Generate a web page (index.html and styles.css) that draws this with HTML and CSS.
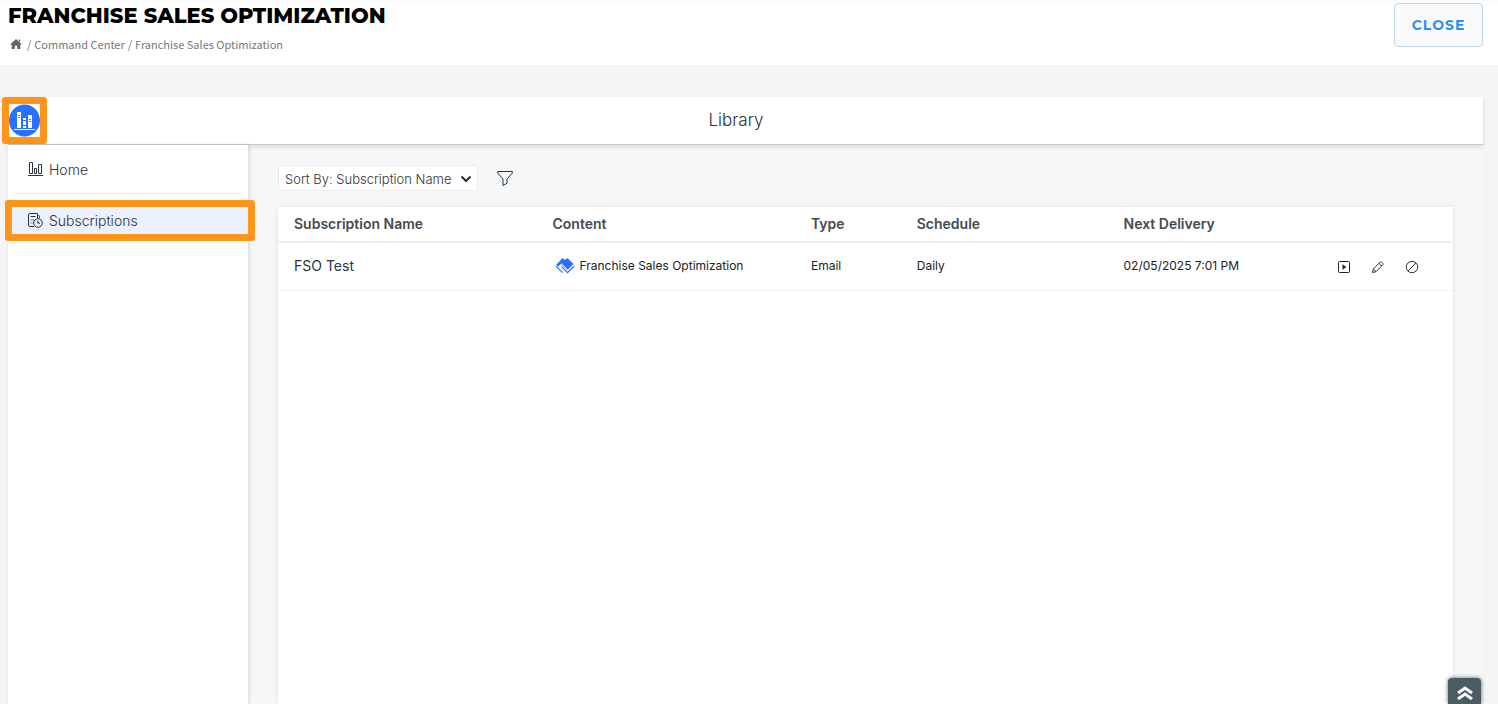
FILE: index.html
```html
<!DOCTYPE html>
<html lang="en">
<head>
    <meta charset="UTF-8">
    <meta name="viewport" content="width=device-width, initial-scale=1.0">
    <title>Franchise Sales Optimization</title>
    <link rel="stylesheet" href="styles.css">
</head>
<body>
<header class="page-header">
    <div>
        <h1>FRANCHISE SALES OPTIMIZATION</h1>
        <nav class="breadcrumb" aria-label="Breadcrumb">
            <a href="#" aria-label="Home">
                <svg width="12" height="10" viewBox="0 0 12 10"><path fill="#666" d="M6 0 12 5.4H10.3V10H7.2V6.8H4.8V10H1.7V5.4H0L6 0ZM8.6.6H10V3L8.6 1.8Z"/></svg>
            </a>
            <span>/</span>
            <a href="#">Command Center</a>
            <span>/</span>
            <a href="#">Franchise Sales Optimization</a>
        </nav>
    </div>
    <button class="close-btn" type="button">CLOSE</button>
</header>

<div class="app">
    <div class="app-bar">
        <button class="logo-btn highlight" type="button" aria-label="Library menu">
            <svg width="31" height="33" viewBox="0 0 31 33">
                <ellipse cx="15.5" cy="16.5" rx="15.5" ry="16" fill="#2970ff"/>
                <path fill="#fff" d="M8 8h4v16H8zM14 14h3v10h-3zM19 11h4v13h-4zM5 25h21v1H5z"/>
                <path fill="#2970ff" d="M9 11h2v1H9zM9 13h2v1H9zM14 16h3v1h-3zM14 21h3v1h-3zM20 15h2v1h-2zM20 17h2v1h-2z"/>
            </svg>
        </button>
        <h2>Library</h2>
    </div>

    <div class="app-body">
        <nav class="sidebar">
            <a class="side-link" href="#">
                <svg width="15" height="15" viewBox="0 0 15 15" fill="none" stroke="#2b3240"><path d="M1.5.5h3v11h-3zM6.500 6.500h2v5h-2zM10.500 2.500h3v9h-3zM0 13.500h15"/></svg>
                Home
            </a>
            <hr>
            <a class="side-link active highlight" href="#">
                <svg width="15" height="15" viewBox="0 0 15 15" fill="none" stroke="#2b3240">
                    <path d="M6 13.5H2A1.5 1.5 0 0 1 .5 12V2A1.5 1.5 0 0 1 2 .5h7.5V5M9.500 2.500h1a1 1 0 0 1 1 1V5M2.500 3.500h5M2.500 7h1M4.500 7h1.500M2.500 10h1M4.500 10h.5"/>
                    <circle cx="10" cy="10" r="4.300"/>
                    <path d="M9.800 7.500v2.700h2.200"/>
                </svg>
                Subscriptions
            </a>
        </nav>

        <main class="content">
            <div class="toolbar">
                <div class="sort">
                    <select aria-label="Sort subscriptions">
                        <option>Sort By: Subscription Name</option>
                        <option>Sort By: Next Delivery</option>
                    </select>
                    <svg width="12" height="8" viewBox="0 0 12 8" fill="none" stroke="#222b38" stroke-width="2"><path d="M1.500 1.500 6 6l4.500-4.500"/></svg>
                </div>
                <button class="icon-btn" type="button" aria-label="Filter">
                    <svg width="16" height="16" viewBox="0 0 16 16" fill="none" stroke="#2b3240" stroke-linejoin="round"><path d="M.7 1.500h14.600v1.600L10 9v4.300L6 15.500V9L.7 3.100z"/></svg>
                </button>
            </div>

            <div class="table-card">
                <table>
                    <colgroup>
                        <col class="col-name">
                        <col class="col-content">
                        <col class="col-type">
                        <col class="col-schedule">
                        <col>
                        <col class="col-actions">
                    </colgroup>
                    <thead>
                    <tr>
                        <th>Subscription Name</th>
                        <th>Content</th>
                        <th>Type</th>
                        <th>Schedule</th>
                        <th>Next Delivery</th>
                        <th></th>
                    </tr>
                    </thead>
                    <tbody>
                    <tr>
                        <td class="name">FSO Test</td>
                        <td>
                            <div class="content-cell">
                                <svg width="20" height="16" viewBox="0 0 20 16">
                                    <path fill="#2970ff" d="M3.500 4.500 7 .5h1.500L10 2 11.500.5H13L18.500 6l-6.300 6.200-5.700-5.700L3.500 9 1 6.800z"/>
                                    <path fill="none" stroke="#fff" d="m1.500 7.500 6.300 6.200M3.500 8.500l3-2.500 6.500 6.300"/>
                                    <path fill="none" stroke="#2970ff" stroke-width="1.200" d="m1 8.200 6.500 6.500M6.500 8.500l6 6.200L19.200 8"/>
                                </svg>
                                <span>Franchise Sales Optimization</span>
                            </div>
                        </td>
                        <td>Email</td>
                        <td>Daily</td>
                        <td>02/05/2025 7:01 PM</td>
                        <td class="actions-cell">
                            <div class="actions">
                                <button class="icon-btn" type="button" aria-label="Run now">
                                    <svg width="14" height="14" viewBox="0 0 14 14"><rect x="1.500" y="1.500" width="11" height="11" rx="1" fill="none" stroke="#222"/><path fill="#222" d="M5.500 4.300 9.300 7 5.500 9.700z"/></svg>
                                </button>
                                <button class="icon-btn" type="button" aria-label="Edit">
                                    <svg width="14" height="14" viewBox="0 0 14 14" fill="none" stroke="#333" stroke-linejoin="round"><path d="m1.500 12.500.8-3.500 7-7c.8-.8 3.500 1.700 2.700 2.700l-7 7zM8 3.300 10.700 6M2.300 9 5 11.700"/></svg>
                                </button>
                                <button class="icon-btn" type="button" aria-label="Disable">
                                    <svg width="14" height="14" viewBox="0 0 14 14" fill="none" stroke="#333"><circle cx="7" cy="7" r="5.700"/><path d="m3 11 8-8"/></svg>
                                </button>
                            </div>
                        </td>
                    </tr>
                    </tbody>
                </table>
            </div>
        </main>
    </div>
</div>

<button class="to-top" type="button" aria-label="Back to top">
    <svg width="16" height="14" viewBox="0 0 16 14" fill="none" stroke="#fff" stroke-width="3"><path d="m1 7 7-5 7 5M1 13l7-5 7 5"/></svg>
</button>
</body>
</html>
```
FILE: styles.css
```css
:root {
    --page-bg: #f5f5f5;
    --content-bg: #f6f7f9;
    --line: #f0f0f0;
    --text: #2b3240;
    --blue: #2b90f0;
    --orange: #ff951a;
}

* {
    margin: 0;
    padding: 0;
    box-sizing: border-box;
}

body {
    display: flex;
    flex-direction: column;
    min-height: 100vh;
    background-color: var(--page-bg);
    color: var(--text);
    font-family: Inter, "Liberation Sans", sans-serif;
    font-size: 14px;
}

a {
    color: inherit;
    text-decoration: none;
}

button {
    font-family: inherit;
    cursor: pointer;
}

svg {
    display: block;
}

/* Header */
.page-header {
    display: flex;
    justify-content: space-between;
    align-items: flex-start;
    height: 65px;
    padding: 3px 15px 0 8px;
    background: linear-gradient(#f9f9f9, #fff 3px);
}

.page-header h1 {
    color: #000;
    font-family: Montserrat, Inter, sans-serif;
    font-size: 21px;
    font-weight: 800;
    line-height: 26px;
}

.breadcrumb {
    display: flex;
    align-items: center;
    gap: 3px;
    margin-top: 5px;
    padding-left: 2px;
    color: #777;
    font-family: "Source Sans Pro", "Noto Sans CJK SC", sans-serif;
    font-size: 11px;
    line-height: 20px;
}

.breadcrumb a:first-child {
    margin-right: 2px;
}

.close-btn {
    width: 89px;
    height: 44px;
    padding-bottom: 1px;
    background-color: #fafafa;
    border: 1px solid #bdd7ee;
    border-radius: 4px;
    color: var(--blue);
    font-family: Montserrat, Inter, sans-serif;
    font-size: 14px;
    font-weight: 700;
    letter-spacing: 1px;
}

/* Orange frame drawn around the items being pointed out */
.highlight {
    position: relative;
}

.highlight::after {
    content: "";
    position: absolute;
    z-index: 3;
    inset: -7px;
    border: 7px solid var(--orange);
    border-radius: 3px;
    pointer-events: none;
}

/* App */
.app {
    display: flex;
    flex: 1;
    flex-direction: column;
    margin: 32px 15px 0 8px;
}

.app-bar {
    position: relative;
    z-index: 2;
    display: grid;
    grid-template-columns: 1fr auto 1fr;
    align-items: center;
    height: 48px;
    padding: 0 20px 0 1px;
    background-color: #fff;
    border-bottom: 1px solid #c8c9cc;
    box-shadow: 0 2px 5px rgba(0, 0, 0, 0.12);
}

.app-bar h2 {
    padding-bottom: 2px;
    font-size: 17px;
    font-weight: 300;
    line-height: 24px;
}

.logo-btn {
    width: 31px;
    height: 33px;
    background: #fff;
    border: none;
}

.app-body {
    display: flex;
    flex: 1;
}

.sidebar {
    position: relative;
    z-index: 2;
    width: 240px;
    background-color: #fff;
    box-shadow: 1px 0 4px rgba(0, 0, 0, 0.14);
}

.side-link {
    display: flex;
    align-items: center;
    gap: 6px;
    height: 27px;
    padding-left: 20px;
    font-weight: 300;
}

.side-link:first-child {
    height: 48px;
}

.side-link.active {
    background-color: #ebf1ff;
}

.side-link.highlight::after {
    inset: -7px -7px -7px -3px;
}

.sidebar hr {
    margin: 0 6px 13px;
    border: none;
    border-top: 1px solid #ececec;
}

.content {
    display: flex;
    flex: 1;
    flex-direction: column;
    padding: 20px 30px 0;
    background-color: var(--content-bg);
}

.toolbar {
    display: flex;
    align-items: center;
    gap: 19px;
    margin-bottom: 16px;
}

.sort {
    position: relative;
    width: 200px;
}

.sort select {
    display: block;
    width: 100%;
    height: 26px;
    padding: 2px 22px 0 6px;
    appearance: none;
    background-color: #fff;
    border: 1px solid #ebebeb;
    border-radius: 3px;
    color: #333;
    font-family: inherit;
    font-size: 13px;
    font-weight: 300;
}

.sort svg {
    position: absolute;
    top: 10px;
    right: 6px;
    pointer-events: none;
}

.icon-btn {
    background: none;
    border: none;
}

/* Table */
.table-card {
    flex: 1;
    background-color: #fff;
    box-shadow: 0 0 6px rgba(0, 0, 0, 0.09);
}

table {
    width: 100%;
    table-layout: fixed;
    border-collapse: separate;
    border-spacing: 0;
}

.col-name,
.col-content {
    width: 22%;
}

.col-type {
    width: 9%;
}

.col-schedule {
    width: 17.6%;
}

.col-actions {
    width: 132px;
}

th,
td {
    padding: 0 16px 2px;
    text-align: left;
}

th {
    height: 36px;
    border-bottom: 2px solid var(--line);
    color: #454a52;
    font-weight: 600;
}

td {
    height: 48px;
    border-bottom: 1px solid var(--line);
    color: #222;
    font-size: 12px;
}

td.name {
    color: var(--text);
    font-size: 14px;
}

td.actions-cell {
    padding-bottom: 0;
}

.content-cell {
    display: flex;
    align-items: center;
    gap: 5px;
    padding-left: 2px;
}

.actions {
    display: flex;
    gap: 20px;
}

/* Back to top */
.to-top {
    position: fixed;
    z-index: 4;
    right: 17px;
    bottom: 0;
    display: flex;
    justify-content: center;
    width: 33px;
    height: 26px;
    padding-top: 8px;
    background-color: #4b5b62;
    border: none;
    border-radius: 4px 4px 0 0;
    box-shadow: 0 0 4px rgba(0, 0, 0, 0.6);
}
```
